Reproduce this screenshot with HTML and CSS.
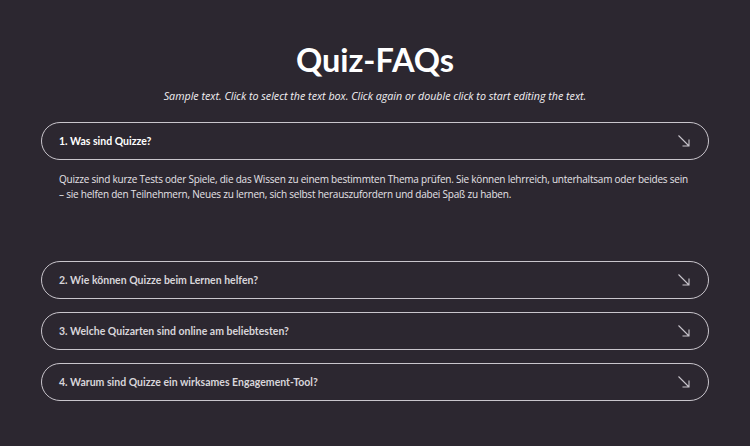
FILE: index.html
```html
<!DOCTYPE html>
<html lang="de">
<head>
<meta charset="utf-8">
<link rel="stylesheet" href="styles.css">
</head>
<body>
<main class="page">
  <h1 class="title">Quiz-FAQs</h1>
  <p class="subtitle">Sample text. Click to select the text box. Click again or double click to start editing the text.</p>
  <div class="faq">
    <div class="item open">
      <div class="q"><span>1. Was sind Quizze?</span><svg class="arrow" width="14" height="14" viewBox="0 0 14 14"><path d="M1.5 1.5 L12 12 M5.5 12 H12 V5.5" fill="none" stroke="#c9c5cc" stroke-width="1.1"/></svg></div>
      <div class="a">Quizze sind kurze Tests oder Spiele, die das Wissen zu einem bestimmten Thema prüfen. Sie können lehrreich, unterhaltsam oder beides sein – sie helfen den Teilnehmern, Neues zu lernen, sich selbst herauszufordern und dabei Spaß zu haben.</div>
    </div>
    <div class="item">
      <div class="q"><span>2. Wie können Quizze beim Lernen helfen?</span><svg class="arrow" width="14" height="14" viewBox="0 0 14 14"><path d="M1.5 1.5 L12 12 M5.5 12 H12 V5.5" fill="none" stroke="#c9c5cc" stroke-width="1.1"/></svg></div>
    </div>
    <div class="item">
      <div class="q"><span>3. Welche Quizarten sind online am beliebtesten?</span><svg class="arrow" width="14" height="14" viewBox="0 0 14 14"><path d="M1.5 1.5 L12 12 M5.5 12 H12 V5.5" fill="none" stroke="#c9c5cc" stroke-width="1.1"/></svg></div>
    </div>
    <div class="item">
      <div class="q"><span>4. Warum sind Quizze ein wirksames Engagement-Tool?</span><svg class="arrow" width="14" height="14" viewBox="0 0 14 14"><path d="M1.5 1.5 L12 12 M5.5 12 H12 V5.5" fill="none" stroke="#c9c5cc" stroke-width="1.1"/></svg></div>
    </div>
  </div>
</main>
</body>
</html>
```
FILE: styles.css
```css
html, body {
  margin: 0;
  padding: 0;
  background: #2c2730;
}
body {
  width: 750px;
  height: 446px;
  overflow: hidden;
  font-family: "Open Sans", sans-serif;
  color: #ffffff;
}
.page {
  padding: 40px 41px 0 41px;
  display: flex;
  flex-direction: column;
}
.title {
  margin: 0;
  font-family: Lato, sans-serif;
  font-weight: 700;
  font-size: 32.5px;
  line-height: 40px;
  text-align: center;
  color: #ffffff;
}
.subtitle {
  margin: 8px 0 0 0;
  font-style: italic;
  font-size: 10.7px;
  line-height: 16px;
  text-align: center;
  color: #f2f0f3;
}
.faq {
  margin-top: 18px;
  display: flex;
  flex-direction: column;
  gap: 13px;
}
.q {
  height: 36px;
  border: 1px solid #c9c5cc;
  border-radius: 20px;
  display: flex;
  align-items: center;
  justify-content: space-between;
  padding: 0 17px 0 17px;
  font-family: Lato, sans-serif;
  font-weight: 700;
  font-size: 10.5px;
  color: #d8d5da;
}
.open .q {
  color: #ffffff;
}
.a {
  padding: 12px 18px 0 18px;
  height: 76px;
  font-size: 10px;
  letter-spacing: -0.22px;
  line-height: 15px;
  color: #e6e3e8;
}
```
